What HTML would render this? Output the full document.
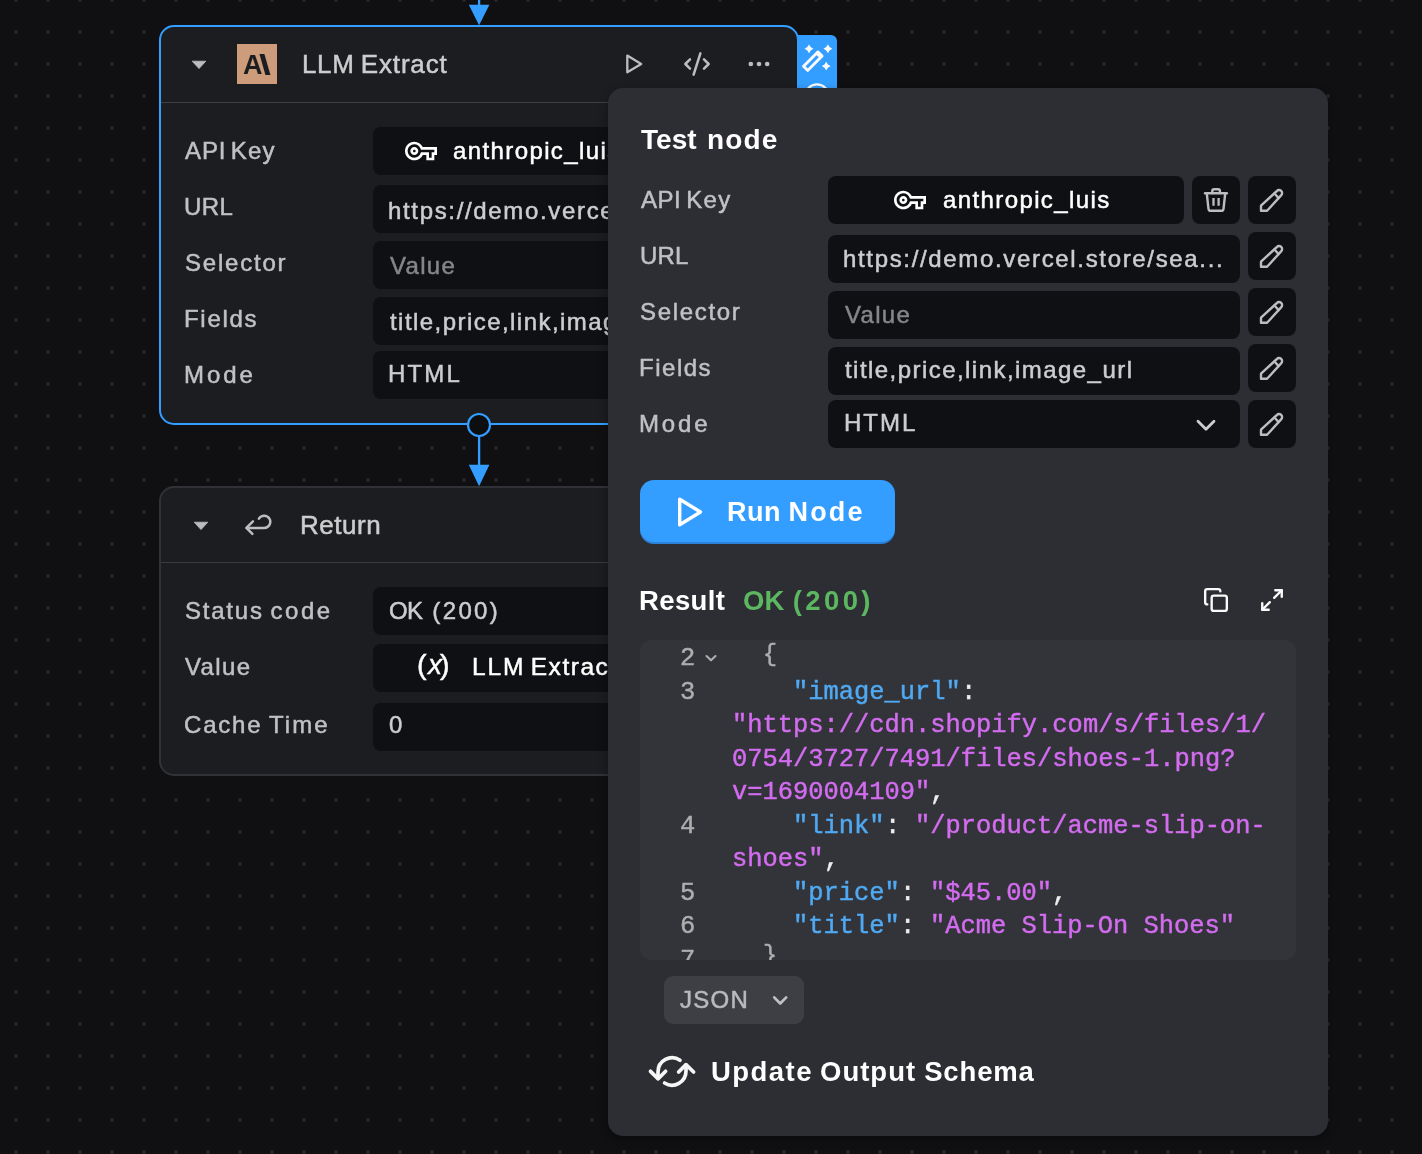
<!DOCTYPE html>
<html lang="en"><head><meta charset="utf-8"><title>Flow editor - Test node</title>
<style>
html,body{margin:0;padding:0}
body{width:1422px;height:1154px;overflow:hidden;position:relative;background:#101013;font-family:"Liberation Sans",sans-serif}
.b{position:absolute;box-sizing:border-box}
.t{position:absolute;white-space:pre;line-height:1;-webkit-text-stroke:0.5px currentColor;will-change:transform}
.t[style*="font-weight:700"]{-webkit-text-stroke:0}
.m{font-family:"Liberation Mono",monospace;-webkit-text-stroke-width:0.45px}
svg{position:absolute;overflow:visible}
</style></head><body>
<div class="b" style="left:0;top:0;width:1422px;height:1154px;background-image:radial-gradient(circle,#292a2e 1.2px,rgba(41,42,46,0) 2.3px);background-size:32px 32px;background-position:0 -16px"></div>
<svg width="1422" height="1154" style="left:0;top:0"><path d="M479.100 0V8" stroke="#339eff" stroke-width="2.300" fill="none"/><path d="M468.800 4.800H489.400L479.100 25.200Z" fill="#339eff"/><path d="M479.100 436V468" stroke="#339eff" stroke-width="2.300" fill="none"/><path d="M468.800 464.800H489.400L479.100 486.200Z" fill="#339eff"/></svg>
<section aria-label="LLM Extract step">
<div class="b" style="left:786px;top:35px;width:51.2px;height:120px;background:#339eff;border-radius:0 6px 6px 0;"></div>
<svg width="40" height="53" style="left:797px;top:35px"><g fill="#fafafa"><path transform="translate(12,13.8)" d="M0-4.4 1.7-1.7 4.4 0 1.7 1.7 0 4.4-1.7 1.7-4.4 0-1.7-1.7Z"/><path transform="translate(30.9,13.8)" d="M0-4.4 1.7-1.7 4.4 0 1.7 1.7 0 4.4-1.7 1.7-4.4 0-1.7-1.7Z"/><path transform="translate(29.2,31.1)" d="M0-4.4 1.7-1.7 4.4 0 1.7 1.7 0 4.4-1.7 1.7-4.4 0-1.7-1.7Z"/><g transform="translate(15.85,26.15) rotate(-45)"><rect x="-11.55" y="-4.3" width="23.1" height="8.6" rx="1.3"/><rect x="-8.75" y="-1.5" width="15.6" height="3" fill="#339eff"/></g></g></svg>
<svg width="28" height="28" viewBox="0 0 24 24" style="left:803px;top:81.8px" fill="none" stroke="#fafafa" stroke-width="2"><circle cx="12" cy="12" r="10"/></svg>
<div class="b node" style="left:159px;top:25px;width:640px;height:400px;background:#1c1d21;border-radius:15px;border:2px solid #339eff;"></div>
<div class="b" style="left:161px;top:101.5px;width:636px;height:1px;background:#3e3f44;"></div>
<svg width="16" height="10" style="left:191px;top:60px"><path d="M1.2 1.2h13.6L8 8.6z" fill="#bdbdc0" stroke="#bdbdc0" stroke-width="0.8" stroke-linejoin="round"/></svg>
<div class="b" style="left:237px;top:44px;width:40px;height:40px;background:#cd9c7b;"></div>
<span class="t" style="left:242.73px;top:52px;font-size:27px;color:#1c1d21;font-weight:700;letter-spacing:1.184px;">A</span>
<span class="t" style="left:258.92px;top:51px;font-size:27.5px;color:#1c1d21;font-weight:700;transform:scaleX(1.55);transform-origin:0 0;">\</span>
<span class="t" style="left:302.07px;top:51px;font-size:26px;color:#cdcdcf;"><span style="letter-spacing:0.644px">LLM</span> <span style="letter-spacing:0.834px;margin-left:-0.944px">Extract</span></span>
<svg width="30" height="30" style="left:619px;top:49px" fill="none" stroke="#bdbdc0" stroke-width="2.3" stroke-linejoin="round"><path d="M8.3 6.6 L22.2 14.9 L8.3 23.2Z"/></svg>
<svg width="28" height="28" viewBox="0 0 24 24" style="left:683px;top:49.9px" fill="none" stroke="#bdbdc0" stroke-width="2.15" stroke-linecap="round" stroke-linejoin="round"><path d="m18 16 4-4-4-4"/><path d="m6 8-4 4 4 4"/><path d="m14.9 2.9-5.8 18.2"/></svg>
<svg width="28" height="28" viewBox="0 0 24 24" style="left:745px;top:50px" fill="#bdbdc0"><circle cx="5" cy="12" r="2"/><circle cx="12" cy="12" r="2"/><circle cx="19" cy="12" r="2"/></svg>
<span class="t" style="left:185.45px;top:139px;font-size:24px;color:#c0c1c4;"><span style="letter-spacing:0.887px">API</span> <span style="letter-spacing:1.128px;margin-left:-2.243px">Key</span></span>
<span class="t" style="left:184.35px;top:195px;font-size:24px;color:#c0c1c4;letter-spacing:0.416px;">URL</span>
<span class="t" style="left:184.61px;top:251px;font-size:24px;color:#c0c1c4;letter-spacing:1.792px;">Selector</span>
<span class="t" style="left:183.83px;top:307px;font-size:24px;color:#c0c1c4;letter-spacing:1.701px;">Fields</span>
<span class="t" style="left:183.83px;top:363px;font-size:24px;color:#c0c1c4;letter-spacing:2.963px;">Mode</span>
<div class="b" style="left:373px;top:127px;width:400px;height:48px;background:#0e1013;border-radius:8px;"></div>
<div class="b" style="left:373px;top:185px;width:400px;height:48px;background:#0e1013;border-radius:8px;"></div>
<div class="b" style="left:373px;top:241px;width:400px;height:48px;background:#0e1013;border-radius:8px;"></div>
<div class="b" style="left:373px;top:297px;width:400px;height:48px;background:#0e1013;border-radius:8px;"></div>
<div class="b" style="left:373px;top:351px;width:400px;height:48px;background:#0e1013;border-radius:8px;"></div>
<svg width="32" height="32" viewBox="0 0 24 24" style="left:405.1px;top:134.9px" fill="#fff"><path d="M22 19h-6v-4h-2.680c-1.140 2.420-3.600 4-6.320 4-3.860 0-7-3.140-7-7s3.140-7 7-7c2.720 0 5.170 1.580 6.320 4H24v6h-2v4zm-4-2h2v-4h2v-2H11.940l-.230-.670C11.010 8.340 9.110 7 7 7c-2.760 0-5 2.240-5 5s2.240 5 5 5c2.110 0 4.010-1.340 4.710-3.330l.230-.670H18v4zM7 15c-1.650 0-3-1.350-3-3s1.350-3 3-3 3 1.350 3 3-1.350 3-3 3zm0-4c-.550 0-1 .450-1 1s.450 1 1 1 1-.450 1-1-.450-1-1-1z"/></svg>
<span class="t" style="left:453.48px;top:139px;font-size:24px;color:#fff;letter-spacing:1.392px;">anthropic_luis</span>
<span class="t" style="left:388.34px;top:199px;font-size:24px;color:#cdcdd0;letter-spacing:1.664px;">https://demo.vercel.store/sea...</span>
<span class="t" style="left:389.89px;top:254px;font-size:24px;color:#85868a;letter-spacing:1.316px;">Value</span>
<span class="t" style="left:389.64px;top:310px;font-size:24px;color:#cdcdd0;letter-spacing:1.448px;">title,price,link,image_url</span>
<span class="t" style="left:388.33px;top:362px;font-size:24px;color:#cdcdd0;letter-spacing:2.141px;">HTML</span>
</section>
<section aria-label="Return step">
<div class="b node" style="left:159px;top:486px;width:640px;height:290px;background:#1c1d21;border-radius:15px;border:2px solid #313237;"></div>
<div class="b" style="left:161px;top:561.5px;width:636px;height:1px;background:#3a3b40;"></div>
<svg width="16" height="10" style="left:193px;top:521px"><path d="M1.2 1.2h13.6L8 8.6z" fill="#bdbdc0" stroke="#bdbdc0" stroke-width="0.8" stroke-linejoin="round"/></svg>
<svg width="30" height="24" style="left:243px;top:513px" fill="none" stroke="#bdbdc0" stroke-width="2.5" stroke-linecap="round" stroke-linejoin="round"><path d="M15.900 5.700A6.100 6.100 0 1 1 21.300 14.900H3.800"/><path d="M9.900 8.400 3.400 14.900 9.400 20.900"/></svg>
<span class="t" style="left:299.67px;top:512px;font-size:26px;color:#cdcdcf;letter-spacing:0.535px;">Return</span>
<span class="t" style="left:184.61px;top:599px;font-size:24px;color:#c0c1c4;"><span style="letter-spacing:1.782px">Status</span> <span style="letter-spacing:2.513px;margin-left:0.159px">code</span></span>
<span class="t" style="left:185.39px;top:655px;font-size:24px;color:#c0c1c4;letter-spacing:1.391px;">Value</span>
<span class="t" style="left:184.48px;top:713px;font-size:24px;color:#c0c1c4;"><span style="letter-spacing:1.803px">Cache</span> <span style="letter-spacing:2.051px;margin-left:-0.080px">Time</span></span>
<div class="b" style="left:373px;top:587px;width:400px;height:48px;background:#0e1013;border-radius:8px;"></div>
<div class="b" style="left:373px;top:643.5px;width:400px;height:48px;background:#0e1013;border-radius:8px;"></div>
<div class="b" style="left:373px;top:702.5px;width:400px;height:48px;background:#0e1013;border-radius:8px;"></div>
<span class="t" style="left:388.86px;top:599px;font-size:24px;color:#cdcdd0;"><span style="letter-spacing:-0.781px">OK</span> <span style="letter-spacing:2.361px;margin-left:3.552px">(200)</span></span>
<span class="t" style="left:416.93px;top:650px;font-size:28.5px;color:#fff;">(</span>
<span class="t" style="left:427.72px;top:651px;font-size:28px;color:#fff;font-style:italic;-webkit-text-stroke:0.4px #fff;">x</span>
<span class="t" style="left:440.03px;top:650px;font-size:28.5px;color:#fff;">)</span>
<span class="t" style="left:471.99px;top:655px;font-size:24.5px;color:#fff;"><span style="letter-spacing:1.874px">LLM</span> <span style="letter-spacing:1.540px;margin-left:-1.406px">Extract</span></span>
<span class="t" style="left:389.06px;top:713px;font-size:24px;color:#cdcdd0;">0</span>
</section>
<svg width="28" height="28" style="left:465px;top:411px"><circle cx="14" cy="14" r="11" fill="#0c0e10" stroke="#339eff" stroke-width="2.2"/></svg>
<section aria-label="Test node">
<div class="b" style="left:608px;top:88px;width:720px;height:1048px;background:#2d2e33;border-radius:15px;box-shadow:0 3px 9px rgba(0,0,8,.35);"></div>
<span class="t" style="left:640.89px;top:126px;font-size:28px;color:#fff;font-weight:700;"><span style="letter-spacing:0.052px">Test</span> <span style="letter-spacing:1.137px;margin-left:2.479px">node</span></span>
<span class="t" style="left:640.75px;top:188px;font-size:24px;color:#c0c1c4;"><span style="letter-spacing:0.437px">API</span> <span style="letter-spacing:1.328px;margin-left:-1.393px">Key</span></span>
<span class="t" style="left:639.85px;top:244px;font-size:24px;color:#c0c1c4;letter-spacing:0.216px;">URL</span>
<span class="t" style="left:640.11px;top:300px;font-size:24px;color:#c0c1c4;letter-spacing:1.677px;">Selector</span>
<span class="t" style="left:639.23px;top:356px;font-size:24px;color:#c0c1c4;letter-spacing:1.521px;">Fields</span>
<span class="t" style="left:639.23px;top:412px;font-size:24px;color:#c0c1c4;letter-spacing:2.829px;">Mode</span>
<div class="b" style="left:828px;top:176px;width:356px;height:48px;background:#0e1013;border-radius:8px;"></div>
<div class="b" style="left:828px;top:235px;width:412px;height:48px;background:#0e1013;border-radius:8px;"></div>
<div class="b" style="left:828px;top:291px;width:412px;height:48px;background:#0e1013;border-radius:8px;"></div>
<div class="b" style="left:828px;top:347px;width:412px;height:48px;background:#0e1013;border-radius:8px;"></div>
<div class="b" style="left:828px;top:400px;width:412px;height:48px;background:#0e1013;border-radius:8px;"></div>
<div class="b" style="left:1192px;top:176px;width:48px;height:48px;background:#0e1013;border-radius:8px;"></div>
<div class="b" style="left:1248px;top:176px;width:48px;height:48px;background:#0e1013;border-radius:8px;"></div>
<svg width="48" height="48" style="left:1248px;top:176px" fill="none" stroke="#bdbdc0" stroke-width="2.4" stroke-linecap="round" stroke-linejoin="round"><path d="M13 34.8H19.1L33.3 19.1A3 3 0 0 0 28.9 15L13 29.6Z"/><path d="M26.400 17.500 30.700 22.100"/></svg>
<div class="b" style="left:1248px;top:232px;width:48px;height:48px;background:#0e1013;border-radius:8px;"></div>
<svg width="48" height="48" style="left:1248px;top:232px" fill="none" stroke="#bdbdc0" stroke-width="2.4" stroke-linecap="round" stroke-linejoin="round"><path d="M13 34.8H19.1L33.3 19.1A3 3 0 0 0 28.9 15L13 29.6Z"/><path d="M26.400 17.500 30.700 22.100"/></svg>
<div class="b" style="left:1248px;top:288px;width:48px;height:48px;background:#0e1013;border-radius:8px;"></div>
<svg width="48" height="48" style="left:1248px;top:288px" fill="none" stroke="#bdbdc0" stroke-width="2.4" stroke-linecap="round" stroke-linejoin="round"><path d="M13 34.8H19.1L33.3 19.1A3 3 0 0 0 28.9 15L13 29.6Z"/><path d="M26.400 17.500 30.700 22.100"/></svg>
<div class="b" style="left:1248px;top:344px;width:48px;height:48px;background:#0e1013;border-radius:8px;"></div>
<svg width="48" height="48" style="left:1248px;top:344px" fill="none" stroke="#bdbdc0" stroke-width="2.4" stroke-linecap="round" stroke-linejoin="round"><path d="M13 34.8H19.1L33.3 19.1A3 3 0 0 0 28.9 15L13 29.6Z"/><path d="M26.400 17.500 30.700 22.100"/></svg>
<div class="b" style="left:1248px;top:400px;width:48px;height:48px;background:#0e1013;border-radius:8px;"></div>
<svg width="48" height="48" style="left:1248px;top:400px" fill="none" stroke="#bdbdc0" stroke-width="2.4" stroke-linecap="round" stroke-linejoin="round"><path d="M13 34.8H19.1L33.3 19.1A3 3 0 0 0 28.9 15L13 29.6Z"/><path d="M26.400 17.500 30.700 22.100"/></svg>
<svg width="48" height="48" style="left:1192px;top:176px" fill="none" stroke="#bdbdc0" stroke-width="2.4" stroke-linecap="round" stroke-linejoin="round"><path d="M13 17.2H34.9"/><path d="M14.8 17.6 16.5 32.8a2.2 2.2 0 0 0 2.2 2h10.6a2.2 2.2 0 0 0 2.2-2L33.2 17.6"/><path d="M20.3 17V15a1.7 1.7 0 0 1 1.700-1.700h4.200a1.700 1.700 0 0 1 1.700 1.700V17"/><path d="M21.500 22V29.700M26.600 22V29.700" stroke-width="2.3" stroke-linecap="butt"/></svg>
<svg width="32" height="32" viewBox="0 0 24 24" style="left:894.4px;top:184.1px" fill="#fff"><path d="M22 19h-6v-4h-2.680c-1.140 2.420-3.600 4-6.320 4-3.860 0-7-3.140-7-7s3.140-7 7-7c2.720 0 5.170 1.580 6.320 4H24v6h-2v4zm-4-2h2v-4h2v-2H11.940l-.230-.670C11.010 8.340 9.110 7 7 7c-2.760 0-5 2.240-5 5s2.240 5 5 5c2.110 0 4.010-1.340 4.710-3.330l.230-.670H18v4zM7 15c-1.650 0-3-1.350-3-3s1.350-3 3-3 3 1.350 3 3-1.350 3-3 3zm0-4c-.550 0-1 .450-1 1s.450 1 1 1 1-.450 1-1-.450-1-1-1z"/></svg>
<span class="t" style="left:942.68px;top:188px;font-size:24px;color:#fff;letter-spacing:1.392px;">anthropic_luis</span>
<span class="t" style="left:842.94px;top:247px;font-size:24px;color:#cdcdd0;letter-spacing:1.661px;">https://demo.vercel.store/sea...</span>
<span class="t" style="left:844.89px;top:303px;font-size:24px;color:#85868a;letter-spacing:1.316px;">Value</span>
<span class="t" style="left:844.64px;top:358px;font-size:24px;color:#cdcdd0;letter-spacing:1.448px;">title,price,link,image_url</span>
<span class="t" style="left:843.63px;top:411px;font-size:24px;color:#cdcdd0;letter-spacing:2.007px;">HTML</span>
<svg width="24" height="16" style="left:1194px;top:417px" fill="none" stroke="#cdcdd0" stroke-width="2.8" stroke-linecap="round" stroke-linejoin="round"><path d="M4 4.3 12 12.2 20 4.3"/></svg>
<div class="b" style="left:640px;top:480px;width:255px;height:64px;background:#339eff;border-radius:14px;box-shadow:inset 0 -2px 0 rgba(0,0,40,.18);"></div>
<svg width="32" height="36" style="left:674px;top:494px" fill="none" stroke="#fff" stroke-width="3.4" stroke-linejoin="round"><path d="M5.700 5.200 L26.500 18 L5.700 30.800Z"/></svg>
<span class="t" style="left:727.39px;top:499px;font-size:27px;color:#fff;font-weight:700;"><span style="letter-spacing:0.498px">Run</span> <span style="letter-spacing:2.176px;margin-left:0.006px">Node</span></span>
<span class="t" style="left:639.36px;top:587px;font-size:27.5px;color:#fff;font-weight:700;letter-spacing:0.386px;">Result</span>
<span class="t" style="left:742.57px;top:587px;font-size:27.5px;color:#5cb860;font-weight:700;"><span style="letter-spacing:0.133px">OK</span> <span style="letter-spacing:3.384px;margin-left:0.602px">(200)</span></span>
<svg width="26" height="26" viewBox="0 0 24 24" style="left:1203px;top:587px" fill="none" stroke="#fafafa" stroke-width="2.2" stroke-linecap="round" stroke-linejoin="round"><rect width="14" height="14" x="8" y="8" rx="2" ry="2"/><path d="M4 16c-1.100 0-2-.9-2-2V4c0-1.100.9-2 2-2h10c1.100 0 2 .9 2 2"/></svg>
<svg width="26" height="26" viewBox="0 0 24 24" style="left:1259px;top:587px" fill="none" stroke="#fafafa" stroke-width="2.2" stroke-linecap="round" stroke-linejoin="round"><path d="M15 3h6v6"/><path d="m21 3-7 7"/><path d="m3 21 7-7"/><path d="M9 21H3v-6"/></svg>
<div class="b" style="left:640px;top:640px;width:656px;height:320px;background:#333439;border-radius:11px;overflow:hidden">
<span class="t m" style="left:39.91px;top:6px;font-size:25.43px;color:#adaeb0;">2</span>
<span class="t m" style="left:123.12px;top:4px;font-size:23.4px;color:#adaeb0;">{</span>
<svg width="12" height="8" style="left:65px;top:13.799999999999955px" fill="none" stroke="#adaeb0" stroke-width="2.1" stroke-linecap="round" stroke-linejoin="round"><path d="M1.5 2 6 6.3 10.5 2"/></svg>
<span class="t m" style="left:40.11px;top:40px;font-size:25.43px;color:#adaeb0;">3</span>
<span class="t m" style="left:153.04px;top:40px;font-size:25.43px;color:#4fa9f3;">"image_url"</span>
<span class="t m" style="left:320.90px;top:40px;font-size:25.43px;color:#ededf0;">:</span>
<span class="t m" style="left:92.00px;top:73px;font-size:25.43px;color:#d36cf0;">"https://cdn.shopify.com/s/files/1/</span>
<span class="t m" style="left:92.00px;top:107px;font-size:25.43px;color:#d36cf0;">0754/3727/7491/files/shoes-1.png?</span>
<span class="t m" style="left:92.00px;top:140px;font-size:25.43px;color:#d36cf0;">v=1690004109"</span>
<span class="t m" style="left:290.38px;top:140px;font-size:25.43px;color:#ededf0;">,</span>
<span class="t m" style="left:40.42px;top:174px;font-size:25.43px;color:#adaeb0;">4</span>
<span class="t m" style="left:153.04px;top:174px;font-size:25.43px;color:#4fa9f3;">"link"</span>
<span class="t m" style="left:244.60px;top:174px;font-size:25.43px;color:#ededf0;">: </span>
<span class="t m" style="left:275.12px;top:174px;font-size:25.43px;color:#d36cf0;">"/product/acme-slip-on-</span>
<span class="t m" style="left:92.00px;top:207px;font-size:25.43px;color:#d36cf0;">shoes"</span>
<span class="t m" style="left:183.56px;top:207px;font-size:25.43px;color:#ededf0;">,</span>
<span class="t m" style="left:40.11px;top:241px;font-size:25.43px;color:#adaeb0;">5</span>
<span class="t m" style="left:153.04px;top:241px;font-size:25.43px;color:#4fa9f3;">"price"</span>
<span class="t m" style="left:259.86px;top:241px;font-size:25.43px;color:#ededf0;">: </span>
<span class="t m" style="left:290.38px;top:241px;font-size:25.43px;color:#d36cf0;">"$45.00"</span>
<span class="t m" style="left:412.46px;top:241px;font-size:25.43px;color:#ededf0;">,</span>
<span class="t m" style="left:39.83px;top:274px;font-size:25.43px;color:#adaeb0;">6</span>
<span class="t m" style="left:153.04px;top:274px;font-size:25.43px;color:#4fa9f3;">"title"</span>
<span class="t m" style="left:259.86px;top:274px;font-size:25.43px;color:#ededf0;">: </span>
<span class="t m" style="left:290.38px;top:274px;font-size:25.43px;color:#d36cf0;">"Acme Slip-On Shoes"</span>
<span class="t m" style="left:39.74px;top:308px;font-size:25.43px;color:#adaeb0;">7</span>
<span class="t m" style="left:123.12px;top:305px;font-size:23.4px;color:#adaeb0;">}</span>
</div>
<div class="b" style="left:664px;top:976px;width:140px;height:48px;background:#3e3f44;border-radius:9px;"></div>
<span class="t" style="left:680.33px;top:988px;font-size:24px;color:#b9babd;letter-spacing:1.272px;">JSON</span>
<svg width="20" height="14" style="left:770px;top:993px" fill="none" stroke="#c0c0c2" stroke-width="2.7" stroke-linecap="round" stroke-linejoin="round"><path d="M4.200 4.400 10.200 10.500 16.200 4.400"/></svg>
<svg width="60" height="50" viewBox="640 1044 60 50" style="left:640px;top:1044px" fill="none" stroke="#f6f6f6" stroke-width="3.7" stroke-linecap="round" stroke-linejoin="round"><path d="M680 1060.300A14 14 0 0 0 658 1072V1078"/><path d="M650.500 1071.300 658.200 1078.800 665.600 1071.300"/><path d="M664.600 1083A14 14 0 0 0 686 1071V1065"/><path d="M678.600 1072 686 1064.600 693.600 1072"/></svg>
<span class="t" style="left:711.45px;top:1058px;font-size:27.5px;color:#fff;font-weight:700;"><span style="letter-spacing:1.458px">Update</span> <span style="letter-spacing:0.991px;margin-left:-0.566px">Output</span> <span style="letter-spacing:0.847px;margin-left:0.441px">Schema</span></span>
</section>
</body></html>
